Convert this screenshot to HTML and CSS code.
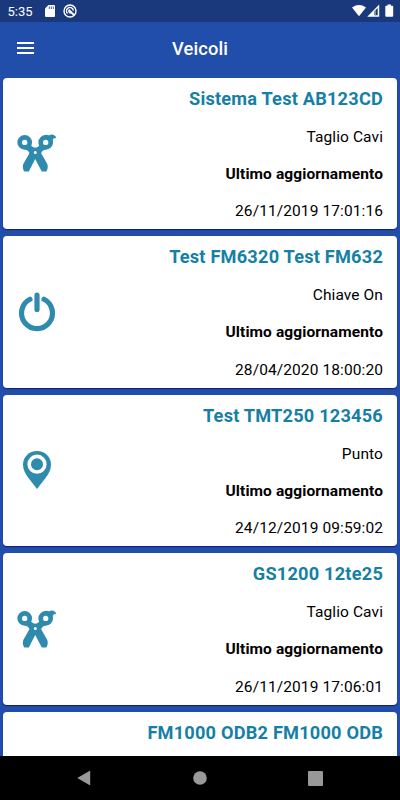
FILE: index.html
```html
<!DOCTYPE html>
<html lang="it">
<head>
  <meta charset="UTF-8" />
  <title>Veicoli</title>
  <meta name="viewport" content="width=device-width, initial-scale=1.0" />
  <link rel="stylesheet" href="styles.css">
</head>
<body>

  <!-- shared icons -->
  <svg class="sprite" width="0" height="0">
    <symbol id="scissors" viewBox="0 0 40 40">
      <g fill="none" stroke="currentColor" stroke-width="4.7">
        <circle cx="7.7" cy="9.4" r="5" />
        <circle cx="28.7" cy="9.4" r="5" />
      </g>
      <path fill="currentColor" d="M27 2.6 Q29.5 1.2 32 2.4 Q34 1.2 36.2 1.8 Q39 2.4 39.3 5.4 Q37.8 4.2 36.2 6 Q35.4 8 34 9.5 Z" />
      <path fill="currentColor" fill-rule="evenodd" d="M13 9.5 Q14 14.4 18.3 14.8 Q22.5 14.4 23.5 9.5 L29.5 15.9 Q25 17 24.2 20.2 L30.3 31 Q31.6 35 29.3 38.4 L24.8 38.4 L18.2 26 L11.8 38.4 L7.3 38.4 Q5 35 6.3 31 L12.4 20.2 Q11.6 17 7 15.9 Z M18.3 18 a1.5 1.5 0 1 0 0 3 a1.5 1.5 0 1 0 0 -3 Z" />
    </symbol>
    <symbol id="power" viewBox="0 0 40 40">
      <path fill="none" stroke="currentColor" stroke-width="5.2" stroke-linecap="round" d="M13 7.3 A15.5 15.5 0 1 0 27 7.3 M20 3.2 V17.5" />
    </symbol>
    <symbol id="pin" viewBox="0 0 40 40">
      <path fill="currentColor" d="M20 1 C12 1 6 7 6 14.5 C6 19.5 8.5 24 11.5 28 L20 39 L28.5 28 C31.5 24 34 19.5 34 14.5 C34 7 28 1 20 1 Z" />
      <circle cx="20" cy="14.2" r="7.8" fill="none" stroke="#fff" stroke-width="3.6" />
    </symbol>
  </svg>

  <div class="status-bar">
    <span class="clock">5:35</span>
    <svg class="sd" width="10" height="12" viewBox="0 0 10 12">
      <path fill="#fff" d="M3.5 0 H9 Q10 0 10 1 V11 Q10 12 9 12 H1 Q0 12 0 11 V3.5 Z" />
      <path stroke="#1a397c" stroke-width=".8" d="M4.3 1.5 V4 M6.3 1.5 V4 M8.3 1.5 V4" />
    </svg>
    <svg class="debug" width="14" height="14" viewBox="0 0 14 14" fill="none" stroke="#fff">
      <circle cx="7" cy="7" r="6" stroke-width="1.4" />
      <path stroke-width="1.3" d="M4.6 9.6 A3.5 3.5 0 1 1 10.4 6.6" />
      <path stroke-width="1.9" d="M5.6 5.8 L11 11" />
      <path stroke-width="1.2" d="M5.3 7.4 L7.6 9.7" />
    </svg>
    <svg class="signals" width="43" height="14" viewBox="0 0 43 14">
      <path fill="#fff" d="M0 3.5 Q7 -1.3 14 3.5 L7 12.3 Z" />
      <path fill="#fff" fill-rule="evenodd" d="M27.2 .5 V12.7 H15.2 Z M22.3 7.2 V11.3 H25.7 V4 Z" />
      <path fill="#8c9cbe" d="M22.3 7.2 L23.9 5.5 V11.3 H22.3 Z" />
      <path fill="#fff" d="M35.5 .6 H39 V1.7 H40.3 Q41.2 1.7 41.2 2.6 V11.8 Q41.2 12.7 40.3 12.7 H34.2 Q33.3 12.7 33.3 11.8 V2.6 Q33.3 1.7 34.2 1.7 H35.5 Z" />
    </svg>
  </div>

  <header>
    <button class="menu" aria-label="Menu"><span></span><span></span><span></span></button>
    <h1>Veicoli</h1>
  </header>

  <main>
    <article class="card">
      <svg class="icon"><use href="#scissors" /></svg>
      <div class="info">
        <h2>Sistema Test AB123CD</h2>
        <p>Taglio Cavi</p>
        <p class="label">Ultimo aggiornamento</p>
        <p>26/11/2019 17:01:16</p>
      </div>
    </article>

    <article class="card">
      <svg class="icon"><use href="#power" /></svg>
      <div class="info">
        <h2>Test FM6320 Test FM632</h2>
        <p>Chiave On</p>
        <p class="label">Ultimo aggiornamento</p>
        <p>28/04/2020 18:00:20</p>
      </div>
    </article>

    <article class="card">
      <svg class="icon"><use href="#pin" /></svg>
      <div class="info">
        <h2>Test TMT250 123456</h2>
        <p>Punto</p>
        <p class="label">Ultimo aggiornamento</p>
        <p>24/12/2019 09:59:02</p>
      </div>
    </article>

    <article class="card">
      <svg class="icon"><use href="#scissors" /></svg>
      <div class="info">
        <h2>GS1200 12te25</h2>
        <p>Taglio Cavi</p>
        <p class="label">Ultimo aggiornamento</p>
        <p>26/11/2019 17:06:01</p>
      </div>
    </article>

    <article class="card">
      <div class="info">
        <h2>FM1000 ODB2 FM1000 ODB</h2>
      </div>
    </article>
  </main>

  <nav class="nav-bar">
    <svg width="14" height="16" viewBox="0 0 14 16"><path fill="#999" d="M13.2 .5 V15.5 L.3 8 Z" /></svg>
    <svg width="14" height="14" viewBox="0 0 14 14"><circle cx="7" cy="7" r="6.8" fill="#999" /></svg>
    <svg width="15" height="15" viewBox="0 0 15 15"><rect width="15" height="15" rx="1" fill="#999" /></svg>
  </nav>

</body>
</html>
```

FILE: styles.css
```css
* {
  box-sizing: border-box;
}
body {
  font-family: Roboto, sans-serif;
  margin: 0;
  height: 800px;
  display: flex;
  flex-direction: column;
  overflow: hidden;
  background: #214dab;
  color: #000;
}
h1, h2, p {
  margin: 0;
}
.sprite {
  position: absolute;
}
.status-bar {
  height: 22px;
  flex: none;
  display: flex;
  align-items: center;
  padding: 0 5px 0 7.5px;
  background: #1a397c;
  color: #fff;
}
.clock {
  width: 37px;
  font-size: 13px;
}
.debug {
  margin-left: 8.5px;
}
.signals {
  margin-left: auto;
}
header {
  height: 55.5px;
  flex: none;
  display: grid;
  grid-template-columns: 52px 1fr 52px;
  align-items: center;
  color: #fff;
}
header h1 {
  font-size: 18.3px;
  font-weight: 500;
  line-height: 24px;
  text-align: center;
  margin-top: -2px;
  letter-spacing: 0.15px;
}
.menu {
  display: flex;
  flex-direction: column;
  gap: 3px;
  width: 17px;
  margin: -3px 0 0 17px;
  padding: 0;
  border: none;
  background: none;
}
.menu span {
  width: 17px;
  height: 2px;
  background: #fff;
}
main {
  flex: 1;
  min-height: 0;
  overflow: hidden;
  display: flex;
  flex-direction: column;
  gap: 7px;
  padding: 0 3.4px;
}
.card {
  flex: none;
  height: 151.5px;
  display: flex;
  align-items: center;
  padding: 0 13.6px;
  border-radius: 4px;
  background: #fff;
  box-shadow: 0 1px 1px rgba(0, 0, 80, 0.6);
}
.icon {
  width: 40px;
  height: 40px;
  color: #2f8bad;
}
.info {
  flex: 1;
  align-self: flex-start;
  padding-top: 10.1px;
  text-align: right;
}
.info h2 {
  font-size: 18.2px;
  font-weight: 700;
  line-height: 22px;
  margin-bottom: 18.3px;
  letter-spacing: 0.2px;
  color: #167fa5;
}
.info p {
  font-size: 15.5px;
  line-height: 18px;
  margin-bottom: 19.1px;
  letter-spacing: 0.1px;
}
.info .label {
  font-weight: 700;
}
.nav-bar {
  height: 44px;
  flex: none;
  display: flex;
  align-items: center;
  justify-content: space-between;
  padding: 0 77px 0 77px;
  background: #000;
}
```
